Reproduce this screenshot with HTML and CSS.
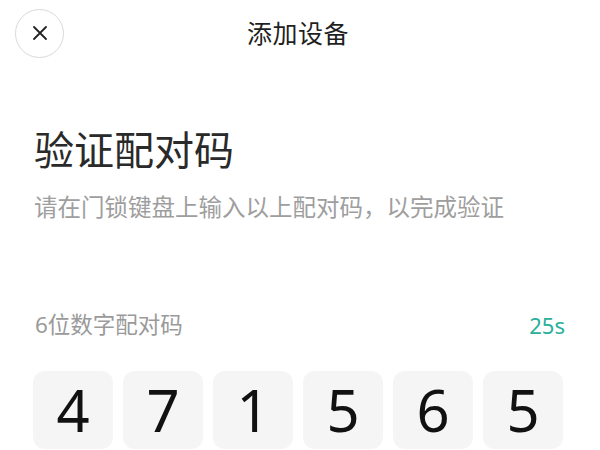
FILE: index.html
```html
<!DOCTYPE html>
<html lang="zh">
<head>
<meta charset="utf-8">
<link rel="stylesheet" href="styles.css">
</head>
<body>
<div class="page">
  <header class="topbar">
    <div class="left">
      <button class="close" aria-label="关闭">
        <svg width="16" height="16" viewBox="0 0 16 16"><path d="M2 2 L14 14 M14 2 L2 14" stroke="#222" stroke-width="1.8" stroke-linecap="round" fill="none"/></svg>
      </button>
    </div>
    <div class="title">添加设备</div>
    <div class="right"></div>
  </header>
  <main class="content">
    <h1 class="heading">验证配对码</h1>
    <p class="sub">请在门锁键盘上输入以上配对码，以完成验证</p>
    <div class="label-row">
      <span class="label">6位数字配对码</span>
      <span class="timer">25s</span>
    </div>
    <div class="codes">
      <div class="digit">4</div>
      <div class="digit">7</div>
      <div class="digit">1</div>
      <div class="digit">5</div>
      <div class="digit">6</div>
      <div class="digit">5</div>
    </div>
  </main>
</div>
</body>
</html>
```
FILE: styles.css
```css
html, body {
  margin: 0;
  padding: 0;
  background: #ffffff;
}
body {
  font-family: "Noto Sans", "Noto Sans CJK SC", sans-serif;
  width: 600px;
  height: 450px;
  overflow: hidden;
}
.page {
  width: 600px;
}
.topbar {
  height: 66px;
  display: grid;
  grid-template-columns: 1fr auto 1fr;
  align-items: center;
}
.left {
  padding-left: 15px;
  display: flex;
  align-items: center;
}
.close {
  width: 49px;
  height: 49px;
  border-radius: 50%;
  border: 1px solid #d9d9d9;
  background: #fff;
  display: flex;
  align-items: center;
  justify-content: center;
  padding: 0;
}
.title {
  font-size: 25px;
  color: #1f1f1f;
  line-height: 30px;
  letter-spacing: 0.5px;
  margin-right: 4px;
}
.content {
  padding: 0 35px 0 34px;
}
.heading {
  margin: 61px 0 0 0;
  font-size: 40px;
  line-height: 46px;
  font-weight: 400;
  color: #2a2a2a;
}
.sub {
  margin: 19px 0 0 0;
  font-size: 23.5px;
  line-height: 30px;
  color: #9e9e9e;
}
.label-row {
  margin-top: 88px;
  display: flex;
  justify-content: space-between;
  align-items: center;
  line-height: 30px;
}
.label {
  font-size: 22.5px;
  color: #9a9a9a;
  margin-left: 1px;
}
.timer {
  font-size: 22px;
  color: #27b09a;
}
.codes {
  margin-top: 31px;
  margin-left: -1px;
  display: flex;
  gap: 10px;
}
.digit {
  width: 80px;
  height: 78px;
  border-radius: 12px;
  background: #f5f5f5;
  display: flex;
  align-items: center;
  justify-content: center;
  font-family: "Noto Sans", sans-serif;
  font-size: 58px;
  color: #111;
  line-height: 1;
}
```
